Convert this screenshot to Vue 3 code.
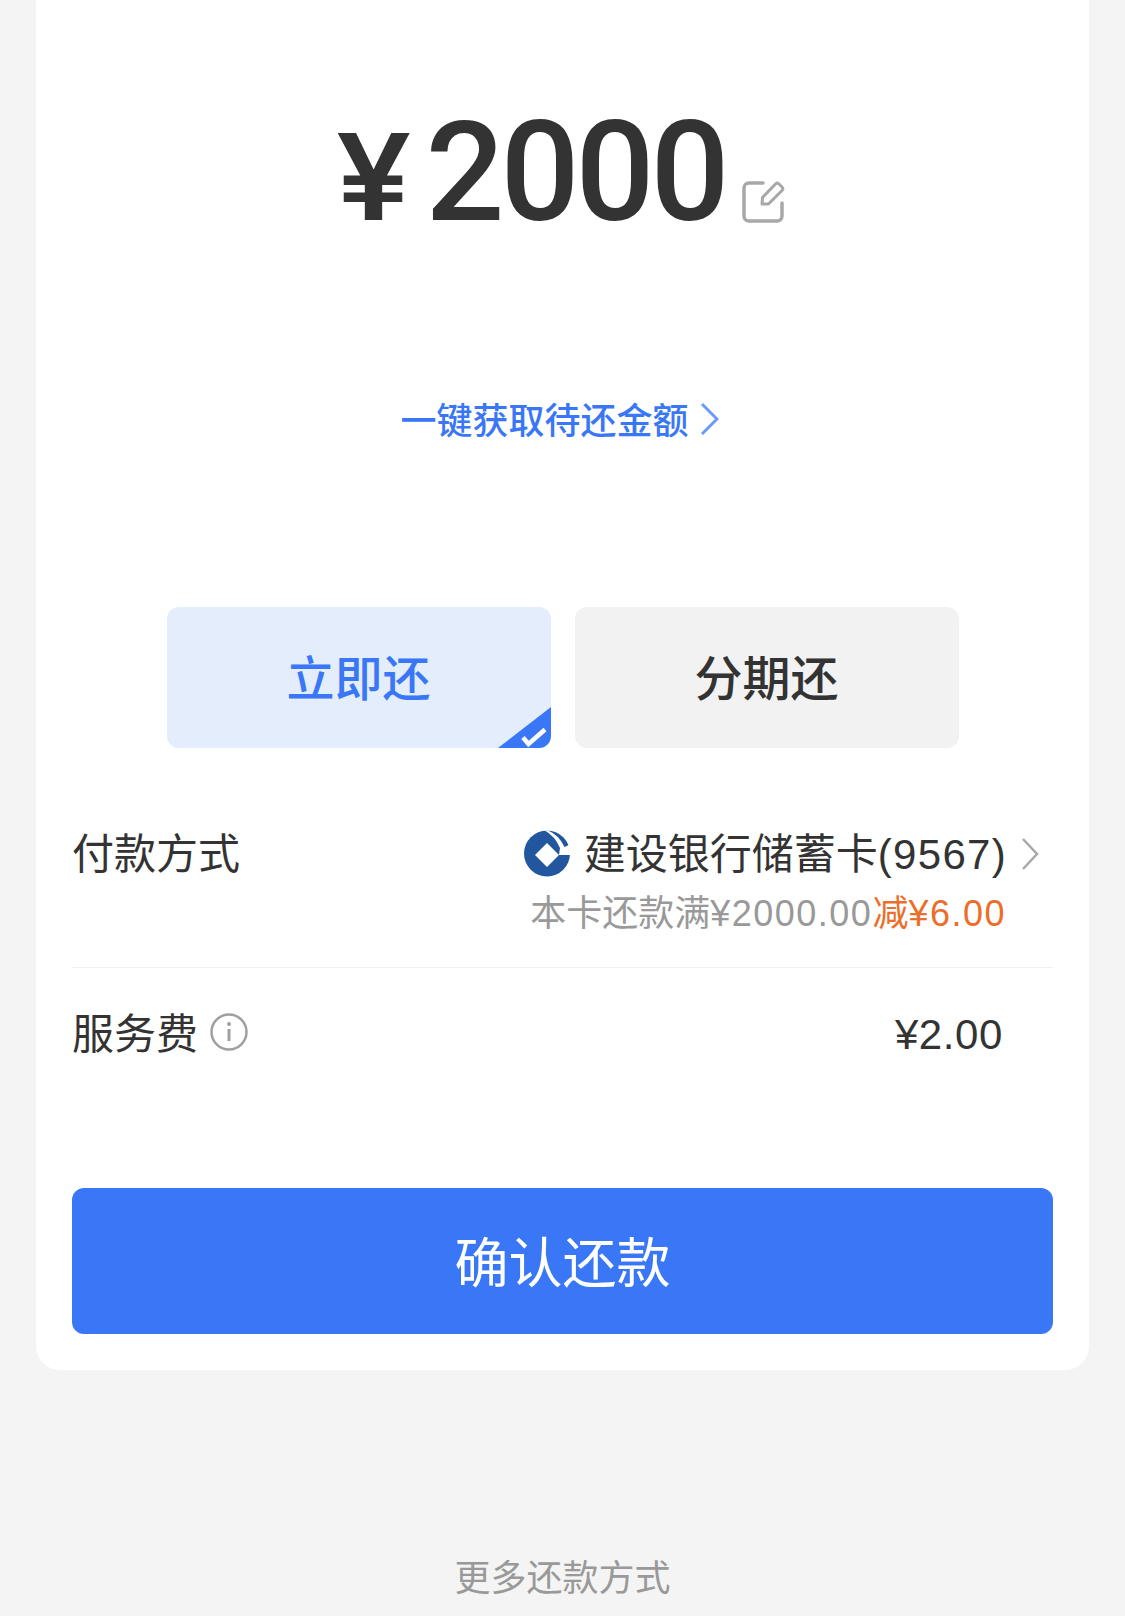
<script setup>
const tabs = [
  { label: '立即还', active: true },
  { label: '分期还', active: false }
]
</script>

<template>
  <div class="page">
    <div class="card">
      <div class="amount">
        <span class="yen">¥</span>
        <span class="num">2000</span>
        <svg class="edit" width="44" height="44" viewBox="0 0 44 44" fill="none">
          <path d="M22 3H8a5 5 0 0 0-5 5v28a5 5 0 0 0 5 5h28a5 5 0 0 0 5-5V23" stroke="#a8a8a8" stroke-width="3.500" stroke-linecap="round" />
          <path d="M21 24l.5-6.500L34.500 4a2.500 2.500 0 0 1 3.500 0l3 3a2.500 2.500 0 0 1 0 3.500L27.500 24z" stroke="#a8a8a8" stroke-width="3" stroke-linejoin="round" />
        </svg>
      </div>

      <div class="fetch">
        <span>一键获取待还金额</span>
        <svg class="fetch-arrow" width="20" height="34" viewBox="0 0 20 34" fill="none">
          <path d="M3 2l15 15L3 32" stroke="#6b9bf8" stroke-width="3" />
        </svg>
      </div>

      <div class="tabs">
        <div v-for="t in tabs" :key="t.label" class="tab" :class="{ active: t.active }">
          <span class="tab-text">{{ t.label }}</span>
          <svg v-if="t.active" class="corner" width="53" height="41" viewBox="0 0 53 41">
            <path d="M0 41L53 0v41z" fill="#3a77f7" />
            <path d="M25 30.500l5.500 6.500L47 22.500" fill="none" stroke="#fff" stroke-width="4.500" />
          </svg>
        </div>
      </div>

      <div class="row pay">
        <div class="label">付款方式</div>
        <div class="right">
          <div class="bank">
            <svg class="logo" width="46" height="47" viewBox="0 0 46 47">
              <circle cx="23" cy="23.500" r="23" fill="#22569f" />
              <path d="M20 0L24 .5Q35 5 40.500 17L46 14.500L48 25H35L36 18Q31 6 20 0z" fill="#fff" />
              <path d="M23 13l12 12-12 12-12-12z" fill="#fff" />
            </svg>
            <span>建设银行储蓄卡<span class="card-no">(9567)</span></span>
          </div>
          <div class="promo">本卡还款满<span class="sum">¥2000.00</span><em>减<span class="sum">¥6.00</span></em></div>
        </div>
        <svg class="chevron" width="18" height="34" viewBox="0 0 18 34" fill="none">
          <path d="M2 2l14 15L2 32" stroke="#a8a8a8" stroke-width="2.500" />
        </svg>
      </div>

      <div class="row fee">
        <div class="label">
          服务费
          <svg class="info" width="38" height="38" viewBox="0 0 38 38" fill="none">
            <circle cx="19" cy="19" r="17.500" stroke="#a0a0a0" stroke-width="2.500" />
            <path d="M19 16v12" stroke="#a0a0a0" stroke-width="3" />
            <circle cx="19" cy="11" r="2" fill="#a0a0a0" />
          </svg>
        </div>
        <div class="price">¥2.00</div>
      </div>

      <div class="confirm">确认还款</div>
    </div>

    <div class="more">更多还款方式</div>
  </div>
</template>

<style>
html,
body {
  margin: 0;
  background: #f4f4f4;
}
</style>

<style scoped>
.page {
  height: 1616px;
  overflow: hidden;
  background: #f4f4f4;
  font-family: "Liberation Sans", "Noto Sans CJK SC", sans-serif;
  color: #333;
}

.card {
  margin: 0 36px;
  padding: 0 36px 36px;
  height: 1370px;
  box-sizing: border-box;
  background: #fff;
  border-radius: 0 0 24px 24px;
}

.amount {
  padding-top: 95px;
  height: 155px;
  display: flex;
  justify-content: center;
  align-items: baseline;
  color: #333;
}

.yen {
  font: 600 119px/155px Inter, sans-serif;
  margin-right: 18px;
  transform: scaleX(1.130);
}

.num {
  font: 500 139px/155px Roboto, sans-serif;
  letter-spacing: -4px;
}

.edit {
  align-self: flex-end;
  margin: 0 0 26px 15px;
}

.fetch {
  margin-top: 143px;
  height: 50px;
  padding-right: 6px;
  display: flex;
  justify-content: center;
  align-items: center;
  gap: 10px;
  font-size: 36px;
  font-weight: 500;
  color: #3a77f7;
}

.fetch-arrow {
  margin-top: 2px;
}

.tabs {
  margin-top: 164px;
  display: flex;
  justify-content: center;
  gap: 24px;
}

.tab {
  position: relative;
  width: 384px;
  height: 141px;
  border-radius: 12px;
  overflow: hidden;
  background: #f2f2f2;
  display: flex;
  align-items: center;
  justify-content: center;
  font-size: 48px;
  font-weight: 500;
  color: #333;
}

.tab-text {
  padding-bottom: 6px;
}

.tab.active {
  background: #e3edfc;
  color: #3a77f7;
}

.corner {
  position: absolute;
  right: 0;
  bottom: 0;
}

.row {
  display: flex;
  justify-content: space-between;
}

.pay {
  margin-top: 77px;
  padding-bottom: 28px;
  border-bottom: 1px solid #f0f0f0;
}

.label {
  font-size: 42px;
  line-height: 60px;
  display: flex;
  align-items: center;
  gap: 12px;
  align-self: flex-start;
  height: 60px;
}

.right {
  margin-left: auto;
  display: flex;
  flex-direction: column;
  align-items: flex-end;
}

.bank {
  display: flex;
  align-items: center;
  gap: 14px;
  font-size: 42px;
  line-height: 60px;
}

.logo {
  margin-top: -4px;
}

.card-no {
  letter-spacing: 1.300px;
}

.promo {
  margin-top: 4px;
  margin-right: 1px;
  font-size: 36px;
  line-height: 50px;
  color: #999;
}

.sum {
  letter-spacing: 1.500px;
}

.promo em {
  font-style: normal;
  color: #ec6e2a;
}

.chevron {
  margin: 12px 14px 0 14px;
}

.fee {
  padding: 37px 50px 0 0;
}

.info {
  margin-top: -6px;
}

.price {
  font-size: 42px;
  line-height: 60px;
  letter-spacing: 0.600px;
}

.confirm {
  margin-top: 123px;
  height: 146px;
  border-radius: 12px;
  background: #3a77f7;
  color: #fff;
  font-size: 54px;
  display: flex;
  align-items: center;
  justify-content: center;
  padding-bottom: 4px;
  box-sizing: border-box;
}

.more {
  margin-top: 184px;
  font-size: 36px;
  line-height: 50px;
  color: #999;
  text-align: center;
}
</style>
